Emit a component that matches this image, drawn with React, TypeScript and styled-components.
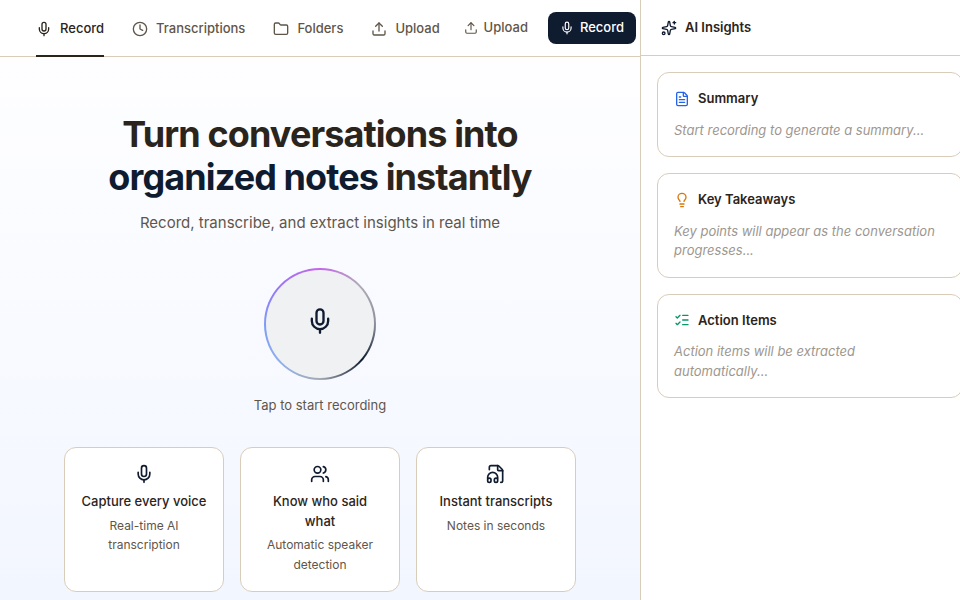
import React from "react";
import styled, { createGlobalStyle } from "styled-components";
import {
  Mic,
  Clock,
  Folder,
  Upload,
  Sparkles,
  FileText,
  Lightbulb,
  ListChecks,
  Users,
  FileHeadphone,
  type LucideIcon,
} from "lucide-react";

const color = {
  ink: "#2b241c",
  muted: "#5f564a",
  faint: "#9d978f",
  navy: "#0f1b2f",
  line: "#d9cdba",
};

const GlobalStyle = createGlobalStyle`
  *, *::before, *::after { box-sizing: border-box; }
  body {
    margin: 0;
    font-family: Inter, "Liberation Sans", sans-serif;
    font-size: 13px;
    line-height: 1.5;
    color: ${color.ink};
    background: #ffffff;
    overflow: hidden;
  }
  h1, h2, h3, p { margin: 0; }
  button { font: inherit; cursor: pointer; }
  svg { flex-shrink: 0; }
`;

const Shell = styled.div`
  display: grid;
  grid-template-columns: minmax(0, 1fr) 320px;
  height: 100vh;
  overflow: hidden;
`;

const Workspace = styled.div`
  display: flex;
  flex-direction: column;
  min-width: 0;
  overflow: hidden;
`;

const TopBar = styled.header`
  display: flex;
  align-items: stretch;
  justify-content: space-between;
  flex-shrink: 0;
  height: 57px;
  padding: 0 4px 0 36px;
  border-bottom: 1px solid ${color.line};
  white-space: nowrap;
`;

const Tabs = styled.nav`
  display: flex;
  gap: 28px;
  margin-bottom: -1px;
`;

const Tab = styled.a<{ $active?: boolean }>`
  display: flex;
  align-items: center;
  gap: 8px;
  box-shadow: inset 0 -2px ${(p) => (p.$active ? color.ink : "transparent")};
  color: ${(p) => (p.$active ? color.ink : color.muted)};
  font-weight: 500;
  text-decoration: none;
`;

const Actions = styled.div`
  display: flex;
  align-items: center;
  gap: 8px;
`;

const ActionButton = styled.button<{ $primary?: boolean }>`
  display: flex;
  align-items: center;
  gap: 6px;
  height: 32px;
  padding: 0 12px;
  border: 0;
  border-radius: 8px;
  font-weight: 500;
  color: ${(p) => (p.$primary ? "#ffffff" : color.muted)};
  background: ${(p) => (p.$primary ? color.navy : "transparent")};
`;

const Hero = styled.main`
  display: flex;
  flex: 1;
  flex-direction: column;
  align-items: center;
  min-height: 0;
  padding: 56px 64px 0;
  text-align: center;
  background: linear-gradient(180deg, #fefeff 0%, #f8faff 50%, #f2f6ff 100%);
`;

const Headline = styled.h1`
  font-size: 36px;
  font-weight: 700;
  line-height: 43px;
  letter-spacing: -0.025em;
`;

const Accent = styled.span`
  color: ${color.navy};
`;

const Lead = styled.p`
  margin-top: 12px;
  font-size: 15px;
  line-height: 24px;
  color: ${color.muted};
`;

const RecordButton = styled.button`
  display: grid;
  place-items: center;
  flex-shrink: 0;
  width: 112px;
  height: 112px;
  margin-top: 33px;
  padding: 0;
  border: 2px solid transparent;
  border-radius: 50%;
  color: ${color.navy};
  background:
    linear-gradient(#f0f1f3, #f0f1f3) padding-box,
    conic-gradient(
      from 0deg,
      #c565ea 0deg,
      #b0a9b8 45deg,
      #8b909b 90deg,
      #0f1b2f 130deg,
      #a5aab4 180deg,
      #8fb0ee 225deg,
      #7d9cf8 270deg,
      #9777f6 310deg,
      #c565ea 360deg
    ) border-box;
`;

const Glyph = styled.span`
  display: block;
`;

const Hint = styled.p`
  margin-top: 16px;
  line-height: 19px;
  color: ${color.muted};
`;

const Features = styled.section`
  display: grid;
  grid-template-columns: repeat(3, minmax(0, 1fr));
  gap: 16px;
  width: 100%;
  max-width: 640px;
  margin-top: 32px;
`;

const FeatureCard = styled.article`
  display: flex;
  flex-direction: column;
  align-items: center;
  padding: 16px;
  border: 1px solid ${color.line};
  border-radius: 12px;
  background: #ffffff;
  color: ${color.navy};
`;

const FeatureTitle = styled.h3`
  margin-top: 8px;
  font-size: 13px;
  font-weight: 500;
  color: ${color.ink};
`;

const FeatureText = styled.p`
  margin-top: 4px;
  font-size: 12px;
  line-height: 1.65;
  color: ${color.muted};
`;

const Insights = styled.aside`
  min-width: 0;
  overflow: hidden;
  border-left: 1px solid ${color.line};
  background: #ffffff;
`;

const InsightsHeader = styled.header`
  display: flex;
  align-items: center;
  gap: 8px;
  height: 56px;
  padding: 0 20px;
  border-bottom: 1px solid ${color.line};
`;

const InsightsTitle = styled.h2`
  font-size: 13px;
  font-weight: 600;
`;

const InsightList = styled.div`
  display: flex;
  flex-direction: column;
  gap: 16px;
  width: 338px;
  padding: 16px;
`;

const InsightCard = styled.section`
  padding: 16px;
  border: 1px solid ${color.line};
  border-radius: 12px;
`;

const InsightHead = styled.div<{ $tint: string }>`
  display: flex;
  align-items: center;
  gap: 8px;
  color: ${(p) => p.$tint};
`;

const InsightName = styled.h3`
  font-size: 13px;
  font-weight: 600;
  color: ${color.ink};
`;

const InsightText = styled.p`
  margin-top: 12px;
  font-style: italic;
  color: ${color.faint};
`;

const tabs: { label: string; icon: LucideIcon; active?: boolean }[] = [
  { label: "Record", icon: Mic, active: true },
  { label: "Transcriptions", icon: Clock },
  { label: "Folders", icon: Folder },
  { label: "Upload", icon: Upload },
];

const features: { title: string; text: string; icon: LucideIcon }[] = [
  { title: "Capture every voice", text: "Real-time AI transcription", icon: Mic },
  { title: "Know who said what", text: "Automatic speaker detection", icon: Users },
  { title: "Instant transcripts", text: "Notes in seconds", icon: FileHeadphone },
];

const insights: { title: string; text: string; icon: LucideIcon; tint: string }[] = [
  { title: "Summary", text: "Start recording to generate a summary...", icon: FileText, tint: "#2563eb" },
  {
    title: "Key Takeaways",
    text: "Key points will appear as the conversation progresses...",
    icon: Lightbulb,
    tint: "#d97706",
  },
  {
    title: "Action Items",
    text: "Action items will be extracted automatically...",
    icon: ListChecks,
    tint: "#059669",
  },
];

export default function App() {
  return (
    <>
      <GlobalStyle />
      <Shell>
        <Workspace>
          <TopBar>
            <Tabs aria-label="Main">
              {tabs.map(({ label, icon: Icon, active }) => (
                <Tab key={label} href="#" $active={active} aria-current={active ? "page" : undefined}>
                  <Icon size={16} />
                  {label}
                </Tab>
              ))}
            </Tabs>
            <Actions>
              <ActionButton type="button">
                <Upload size={14} />
                Upload
              </ActionButton>
              <ActionButton type="button" $primary>
                <Mic size={14} />
                Record
              </ActionButton>
            </Actions>
          </TopBar>
          <Hero>
            <Headline>
              Turn conversations into
              <br />
              <Accent>organized notes</Accent> instantly
            </Headline>
            <Lead>Record, transcribe, and extract insights in real time</Lead>
            <RecordButton type="button" aria-label="Start recording">
              <Glyph>
                <Mic size={28} />
              </Glyph>
            </RecordButton>
            <Hint>Tap to start recording</Hint>
            <Features>
              {features.map(({ title, text, icon: Icon }) => (
                <FeatureCard key={title}>
                  <Icon size={20} />
                  <FeatureTitle>{title}</FeatureTitle>
                  <FeatureText>{text}</FeatureText>
                </FeatureCard>
              ))}
            </Features>
          </Hero>
        </Workspace>
        <Insights>
          <InsightsHeader>
            <Sparkles size={16} color={color.navy} />
            <InsightsTitle>AI Insights</InsightsTitle>
          </InsightsHeader>
          <InsightList>
            {insights.map(({ title, text, icon: Icon, tint }) => (
              <InsightCard key={title}>
                <InsightHead $tint={tint}>
                  <Icon size={16} />
                  <InsightName>{title}</InsightName>
                </InsightHead>
                <InsightText>{text}</InsightText>
              </InsightCard>
            ))}
          </InsightList>
        </Insights>
      </Shell>
    </>
  );
}
